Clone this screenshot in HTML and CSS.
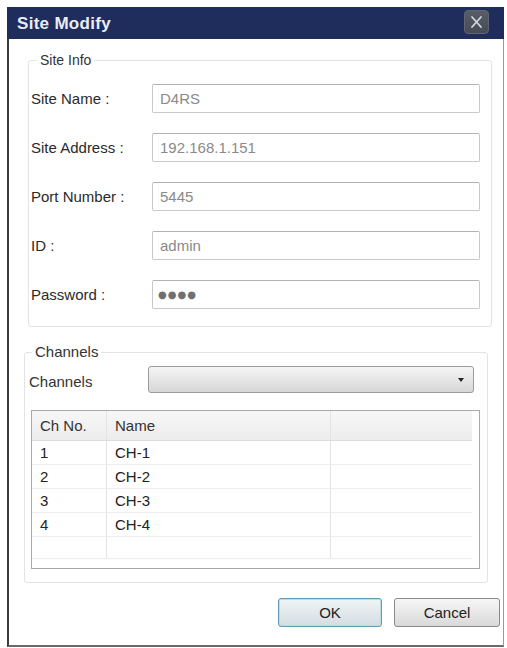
FILE: index.html
```html
<!DOCTYPE html>
<html>
<head>
<meta charset="utf-8">
<link rel="stylesheet" href="styles.css">
</head>
<body>
<div class="window">
  <div class="titlebar">
    <div class="title">Site Modify</div>
    <div class="close">
      <svg width="23" height="22" viewBox="0 0 23 22"><path d="M7 6 L16 16 M16 6 L7 16" stroke="#d3d6dc" stroke-width="1.8" stroke-linecap="round" fill="none"/></svg>
    </div>
  </div>
  <div class="body">
    <div class="group info">
      <div class="legend">Site Info</div>
      <div class="frow"><div class="lbl">Site Name :</div><div class="field">D4RS</div></div>
      <div class="frow"><div class="lbl">Site Address :</div><div class="field">192.168.1.151</div></div>
      <div class="frow"><div class="lbl">Port Number :</div><div class="field">5445</div></div>
      <div class="frow"><div class="lbl">ID :</div><div class="field">admin</div></div>
      <div class="frow"><div class="lbl">Password :</div><div class="field pw">●●●●</div></div>
    </div>
    <div class="group channels">
      <div class="legend">Channels</div>
      <div class="crow">
        <div class="clbl">Channels</div>
        <div class="select"><span class="arrow"></span></div>
      </div>
      <div class="tbl">
        <div class="trow head"><div class="cell">Ch No.</div><div class="cell">Name</div><div class="cell"></div></div>
        <div class="trow"><div class="cell">1</div><div class="cell">CH-1</div><div class="cell"></div></div>
        <div class="trow"><div class="cell">2</div><div class="cell">CH-2</div><div class="cell"></div></div>
        <div class="trow"><div class="cell">3</div><div class="cell">CH-3</div><div class="cell"></div></div>
        <div class="trow"><div class="cell">4</div><div class="cell">CH-4</div><div class="cell"></div></div>
        <div class="trow empty"><div class="cell"></div><div class="cell"></div><div class="cell"></div></div>
      </div>
    </div>
    <div class="buttons">
      <div class="btn ok">OK</div>
      <div class="btn cancel">Cancel</div>
    </div>
  </div>
</div>
</body>
</html>
```
FILE: styles.css
```css
html, body {
  margin: 0;
  padding: 0;
  background: #ffffff;
}
body {
  padding: 7px 0 0 7px;
  font-family: "Liberation Sans", Arial, sans-serif;
  color: #222;
}
.window {
  width: 497px;
  height: 640px;
  display: flex;
  flex-direction: column;
}
.titlebar {
  height: 32px;
  background: #1e2d5c;
  display: flex;
  align-items: flex-start;
  justify-content: space-between;
  flex: none;
}
.title {
  color: #e9edf6;
  font-weight: bold;
  font-size: 17px;
  margin: 7px 0 0 10px;
  letter-spacing: 0.3px;
}
.close {
  width: 25px;
  height: 24px;
  box-sizing: border-box;
  margin: 3px 15px 0 0;
  background: linear-gradient(#575c67, #464b55);
  border: 1px solid #5f6572;
  border-radius: 4px;
  display: flex;
  align-items: center;
  justify-content: center;
}
.body {
  flex: 1;
  border-left: 2px solid #3c3c3c;
  border-right: 1px solid #9a9a9a;
  border-bottom: 2px solid #6a6a6a;
  display: flex;
  flex-direction: column;
}
.group {
  position: relative;
  border: 1px solid #e3e3e3;
  border-radius: 3px;
  box-sizing: border-box;
  width: 464px;
}
.legend {
  position: absolute;
  top: -10px;
  background: #fff;
  padding: 0 3px;
  font-size: 14px;
  color: #333;
  line-height: 18px;
}
.info {
  margin: 21px 0 0 19px;
  height: 267px;
  padding: 23px 11px 0 2px;
  display: flex;
  flex-direction: column;
  gap: 20px;
}
.info .legend {
  left: 8px;
}
.frow {
  display: flex;
  align-items: center;
  height: 29px;
}
.lbl {
  width: 121px;
  font-size: 15px;
  color: #2a2a2a;
}
.field {
  flex: 1;
  height: 29px;
  box-sizing: border-box;
  border: 1px solid #c9c9c9;
  border-top-color: #b3b3b3;
  border-radius: 2px;
  padding-left: 7px;
  font-size: 15px;
  line-height: 27px;
  color: #8a8a8a;
}
.field.pw {
  font-family: "DejaVu Sans", sans-serif;
  font-size: 10px;
  letter-spacing: 1px;
  color: #707070;
  padding-left: 5px;
}
.channels {
  margin: 25px 0 0 15px;
  height: 231px;
  padding: 13px 7px 0 4px;
  display: flex;
  flex-direction: column;
}
.channels .legend {
  left: 7px;
  font-size: 15px;
}
.crow {
  display: flex;
  align-items: center;
  height: 27px;
  padding-right: 6px;
}
.clbl {
  width: 119px;
  font-size: 15px;
  color: #333;
  padding-top: 4px;
}
.select {
  flex: 1;
  height: 27px;
  box-sizing: border-box;
  border: 1px solid #9c9c9c;
  border-radius: 3px;
  background: linear-gradient(#f5f5f5, #e6e6e6 50%, #d6d6d6);
  display: flex;
  align-items: center;
  justify-content: flex-end;
  padding-right: 9px;
}
.arrow {
  width: 0;
  height: 0;
  border-left: 3px solid transparent;
  border-right: 3px solid transparent;
  border-top: 4px solid #222;
}
.tbl {
  margin: 17px 0 0 2px;
  height: 159px;
  box-sizing: border-box;
  border: 1px solid #a9a9a9;
  display: flex;
  flex-direction: column;
}
.trow {
  display: grid;
  grid-template-columns: 75px 224px 141px;
  width: 440px;
  height: 24px;
  box-sizing: border-box;
  border-bottom: 1px solid #ececec;
  font-size: 15px;
  color: #222;
}
.trow.head {
  height: 30px;
  background: linear-gradient(#f7f7f7, #ececec);
  border-bottom: 1px solid #dcdcdc;
  color: #333;
}
.trow.empty {
  height: 22px;
}
.cell {
  border-right: 1px solid #e3e3e3;
  padding-left: 8px;
  display: flex;
  align-items: center;
}
.cell:last-child {
  border-right: none;
}
.buttons {
  display: flex;
  justify-content: flex-end;
  gap: 12px;
  margin: 15px 3px 0 0;
}
.btn {
  height: 29px;
  box-sizing: border-box;
  border-radius: 3px;
  display: flex;
  align-items: center;
  justify-content: center;
  font-size: 15px;
  color: #222;
}
.ok {
  width: 104px;
  border: 1px solid #5f9fb6;
  box-shadow: inset 0 0 0 1px #b9dce8;
  background: linear-gradient(#f0f4f6, #e2e8eb 50%, #d4dde2);
}
.cancel {
  width: 106px;
  border: 1px solid #8a8a8a;
  background: linear-gradient(#f6f6f6, #e8e8e8 50%, #d9d9d9);
}
```
